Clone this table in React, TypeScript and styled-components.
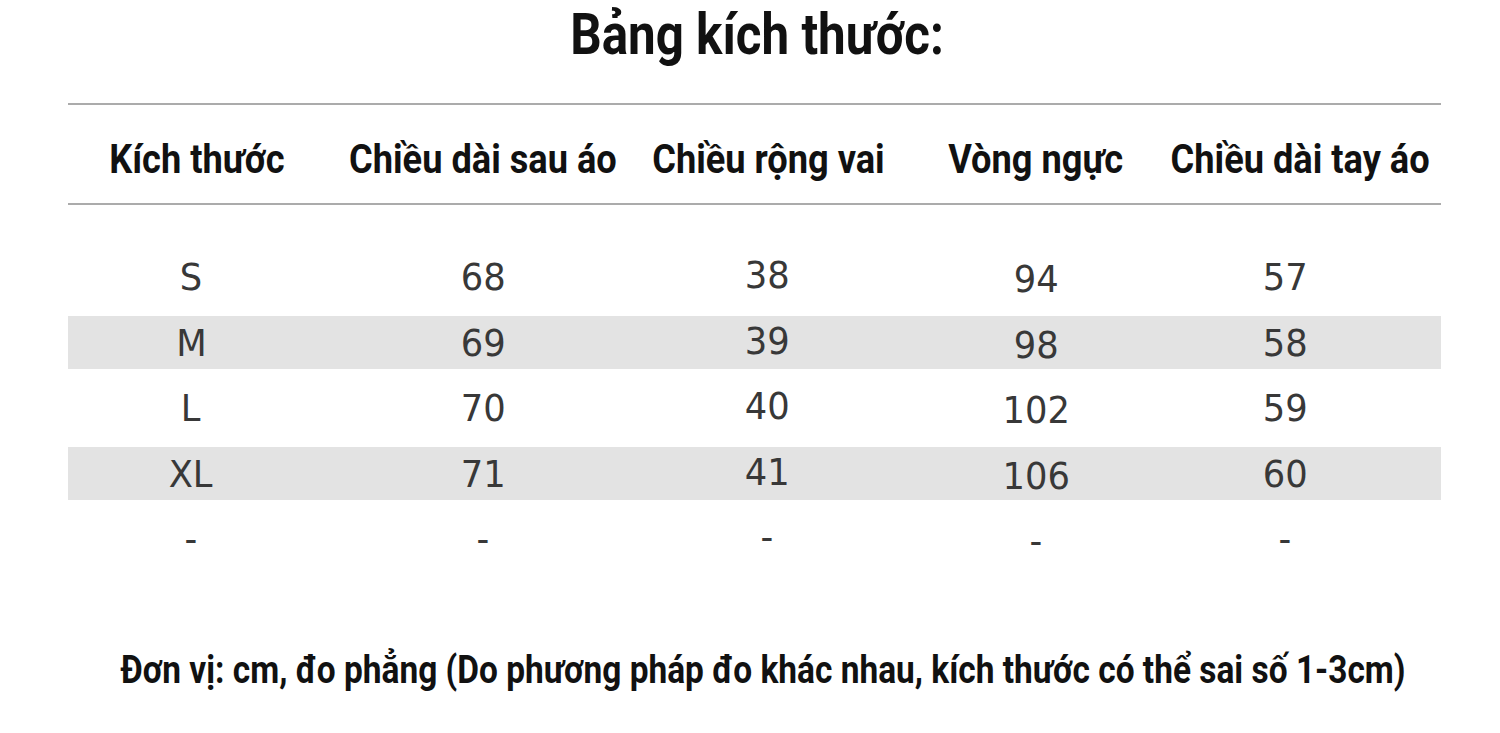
import React from "react";
import styled, { createGlobalStyle } from "styled-components";

const GlobalStyle = createGlobalStyle`
  html, body { margin: 0; padding: 0; background: #ffffff; }
  body { font-family: Roboto, "Noto Sans", sans-serif; }
`;

const Page = styled.div`
  width: 1500px;
  height: 733px;
  background: #ffffff;
  display: flex;
  flex-direction: column;
  align-items: stretch;
  overflow: hidden;
`;

const Condensed = styled.span<{ $squeeze?: number }>`
  display: inline-block;
  white-space: nowrap;
  transform: scaleX(${(p) => p.$squeeze ?? 0.9});
  transform-origin: center;
`;

const Title = styled.h1`
  margin: 0;
  padding-top: 2px;
  height: 66px;
  text-align: center;
  font-family: Roboto, sans-serif;
  font-weight: 700;
  font-size: 57px;
  line-height: 66px;
  color: #111111;
  padding-left: 14px;
`;

const Table = styled.div`
  margin: 35px 0 0 68px;
  width: 1373px;
  display: flex;
  flex-direction: column;
`;

const columns = "246px 338px 230px 308px 190px";

const HeaderRow = styled.div`
  display: grid;
  grid-template-columns: ${columns};
  align-items: center;
  height: 98px;
  border-top: 2px solid #ababab;
  border-bottom: 2px solid #ababab;
`;

const HeaderCell = styled.div<{ $shift?: number }>`
  display: flex;
  justify-content: center;
  font-family: Roboto, sans-serif;
  font-weight: 700;
  font-size: 40px;
  line-height: 48px;
  color: #111111;
  margin-top: 12px;
  padding-left: ${(p) => (p.$shift ?? 0) * 2}px;
`;

const Body = styled.div`
  padding-top: 39px;
  display: flex;
  flex-direction: column;
`;

const Row = styled.div<{ $shaded?: boolean }>`
  display: grid;
  grid-template-columns: ${columns};
  align-items: center;
  height: 65.5px;
  box-sizing: border-box;
  padding: 6.25px 0;
  background: ${(p) => (p.$shaded ? "#e3e3e3" : "transparent")};
  background-clip: content-box;
`;

const Cell = styled.div<{ $dy?: number }>`
  display: flex;
  justify-content: center;
  font-family: "DejaVu Sans", sans-serif;
  font-size: 38px;
  line-height: 53px;
  color: #383838;
  position: relative;
  top: ${(p) => p.$dy ?? 0}px;
`;

const Footer = styled.div`
  margin-top: 74px;
  display: flex;
  justify-content: center;
  font-family: Roboto, sans-serif;
  font-weight: 700;
  font-size: 38px;
  line-height: 48px;
  color: #111111;
  padding-left: 26px;
`;

const headers = [
  { label: "Kích thước", shift: 6 },
  { label: "Chiều dài sau áo", shift: 0 },
  { label: "Chiều rộng vai", shift: 1 },
  { label: "Vòng ngực", shift: 0 },
  { label: "Chiều dài tay áo", shift: 15 },
];

const rows: string[][] = [
  ["S", "68", "38", "94", "57"],
  ["M", "69", "39", "98", "58"],
  ["L", "70", "40", "102", "59"],
  ["XL", "71", "41", "106", "60"],
  ["-", "-", "-", "-", "-"],
];

const offsets = [1, 1, -1, 3, 1];

export default function App() {
  return (
    <Page>
      <GlobalStyle />
      <Title>
        <Condensed $squeeze={0.865}>Bảng kích thước:</Condensed>
      </Title>
      <Table>
        <HeaderRow>
          {headers.map((h) => (
            <HeaderCell key={h.label} $shift={h.shift}>
              <Condensed $squeeze={0.905}>{h.label}</Condensed>
            </HeaderCell>
          ))}
        </HeaderRow>
        <Body>
          {rows.map((r, i) => (
            <Row key={i} $shaded={i % 2 === 1}>
              {r.map((v, j) => (
                <Cell key={j} $dy={offsets[j]}>
                  <Condensed $squeeze={0.93}>{v}</Condensed>
                </Cell>
              ))}
            </Row>
          ))}
        </Body>
      </Table>
      <Footer>
        <Condensed $squeeze={0.88}>
          Đơn vị: cm, đo phẳng (Do phương pháp đo khác nhau, kích thước có thể sai số 1-3cm)
        </Condensed>
      </Footer>
    </Page>
  );
}
